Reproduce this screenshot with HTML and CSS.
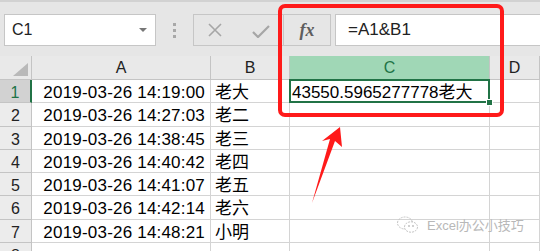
FILE: index.html
```html
<!DOCTYPE html>
<html>
<head>
  <meta charset="utf-8">
  <title>Excel</title>
  <link rel="stylesheet" href="styles.css">
</head>
<body>
  <div class="toolbar">
    <div class="namebox">C1<span class="caret"></span></div>
    <div class="grip"><i></i><i></i><i></i></div>
    <div class="btns">
      <svg class="cancel" width="16" height="14" viewBox="0 0 16 14"><path d="M2 1 L14 13 M14 1 L2 13" stroke="#a6a6a6" stroke-width="1.6" fill="none"/></svg>
      <svg class="enter" width="18" height="13" viewBox="0 0 18 13"><path d="M1 7 L6 12 L17 1" stroke="#a6a6a6" stroke-width="2.2" fill="none"/></svg>
    </div>
    <div class="fx">fx</div>
    <div class="formula">=A1&amp;B1</div>
  </div>

  <div class="sheet">
    <div class="hd corner"><span class="tri"></span></div>
    <div class="hd">A</div>
    <div class="hd">B</div>
    <div class="hd sel-col">C</div>
    <div class="hd">D</div>

    <div class="rh sel-row">1</div><div class="c date">2019-03-26 14:19:00</div><div class="c">老大</div><div class="c active">43550.5965277778老大</div><div class="c"></div>
    <div class="rh">2</div><div class="c date">2019-03-26 14:27:03</div><div class="c">老二</div><div class="c"></div><div class="c"></div>
    <div class="rh">3</div><div class="c date">2019-03-26 14:38:45</div><div class="c">老三</div><div class="c"></div><div class="c"></div>
    <div class="rh">4</div><div class="c date">2019-03-26 14:40:42</div><div class="c">老四</div><div class="c"></div><div class="c"></div>
    <div class="rh">5</div><div class="c date">2019-03-26 14:41:07</div><div class="c">老五</div><div class="c"></div><div class="c"></div>
    <div class="rh">6</div><div class="c date">2019-03-26 14:42:14</div><div class="c">老六</div><div class="c"></div><div class="c"></div>
    <div class="rh">7</div><div class="c date">2019-03-26 14:48:21</div><div class="c">小明</div><div class="c"></div><div class="c"></div>
    <div class="rh">8</div><div class="c date"></div><div class="c"></div><div class="c"></div><div class="c"></div>
  </div>

  <div class="mark-box"></div>
  <svg class="arrow" width="60" height="90" viewBox="300 120 60 90">
    <polygon points="340,127 342,147 335,141 312,203 330,139 322,141" fill="#ff1a1a"/>
  </svg>
  <div class="watermark">
    <svg width="24" height="18" viewBox="0 0 24 18"><ellipse cx="9" cy="7" rx="7.5" ry="6" fill="none" stroke="#c4c4c4" stroke-width="1" stroke-dasharray="2 1"/><ellipse cx="15" cy="11" rx="6.5" ry="5.2" fill="#fff" stroke="#c4c4c4" stroke-width="1" stroke-dasharray="2 1"/><circle cx="13" cy="10" r="0.9" fill="#bbb"/><circle cx="17" cy="10" r="0.9" fill="#bbb"/></svg>
    <span>Excel办公小技巧</span>
  </div>
</body>
</html>
```

FILE: styles.css
```css
html, body {
  margin: 0;
  padding: 0;
  background: #fff;
  overflow: hidden;
  font-family: "Liberation Sans", "Noto Sans CJK SC", sans-serif;
}
body {
  position: relative;
  width: 540px;
  height: 251px;
}
.toolbar {
  height: 56px;
  box-sizing: border-box;
  border-top: 2px solid #d2d2d2;
  background: #e6e6e6;
  display: flex;
  align-items: flex-start;
  padding: 12px 0 0 4px;
}
.namebox {
  width: 152px;
  height: 32px;
  box-sizing: border-box;
  background: #fff;
  border: 1px solid #c6c6c6;
  font-size: 16px;
  line-height: 30px;
  padding-left: 7px;
  color: #222;
  position: relative;
}
.caret {
  position: absolute;
  right: 8px;
  top: 13px;
  border-left: 4px solid transparent;
  border-right: 4px solid transparent;
  border-top: 4px solid #777;
}
.grip {
  width: 3px;
  margin: 9px 17px 0 17px;
  display: flex;
  flex-direction: column;
  gap: 3px;
}
.grip i {
  width: 3px;
  height: 3px;
  background: #a8a8a8;
}
.btns {
  width: 91px;
  height: 32px;
  box-sizing: border-box;
  background: #e6e6e6;
  border: 1px solid #c6c6c6;
  display: flex;
  align-items: center;
  padding-left: 13px;
}
.btns .enter {
  margin-left: 29px;
  margin-top: 2px;
}
.fx {
  width: 47px;
  height: 32px;
  box-sizing: border-box;
  border: 1px solid #c6c6c6;
  border-left: none;
  font-family: "Liberation Serif", serif;
  font-style: italic;
  font-weight: bold;
  font-size: 18px;
  color: #5e5e5e;
  text-align: center;
  line-height: 30px;
}
.formula {
  flex: 1;
  height: 32px;
  box-sizing: border-box;
  margin-left: 4px;
  background: #fff;
  border: 1px solid #c6c6c6;
  border-right: none;
  font-size: 17px;
  line-height: 30px;
  padding-left: 12px;
  color: #222;
}
.sheet {
  display: grid;
  grid-template-columns: 32px 179px 79px 200px 1fr;
  grid-template-rows: 24px;
  grid-auto-rows: 23.3px;
}
.hd, .rh, .c {
  box-sizing: border-box;
  border-right: 1px solid #d4d4d4;
  border-bottom: 1px solid #d4d4d4;
  white-space: nowrap;
  overflow: visible;
}
.hd {
  background: #e9e9e9;
  border-color: #c4c4c4;
  text-align: center;
  font-size: 16px;
  line-height: 24px;
  color: #222;
}
.corner {
  position: relative;
}
.tri {
  position: absolute;
  right: 3px;
  bottom: 3px;
  width: 0;
  height: 0;
  border-left: 15px solid transparent;
  border-bottom: 13px solid #b9b9b9;
}
.sel-col {
  background: #a0d7b6;
  color: #217346;
  border-bottom-color: #217346;
}
.rh {
  background: #ececec;
  border-color: #c4c4c4;
  text-align: center;
  font-size: 16px;
  line-height: 20px;
  padding-top: 3px;
  color: #222;
}
.sel-row {
  background: #d2d2d2;
  color: #217346;
  border-right: 2px solid #217346;
}
.c {
  font-size: 17px;
  line-height: 20px;
  padding: 3px 4px 0 4px;
  color: #000;
}
.date {
  text-align: right;
  padding-right: 5px;
  letter-spacing: 0.2px;
}
.active {
  position: relative;
  padding-left: 2px;
}
.active::after {
  content: "";
  position: absolute;
  left: -1px;
  top: -1px;
  right: -1px;
  bottom: -1px;
  border: 2px solid #217346;
}
.active::before {
  content: "";
  position: absolute;
  right: -4px;
  bottom: -4px;
  width: 5px;
  height: 5px;
  background: #217346;
  border: 1px solid #fff;
  z-index: 1;
}
.mark-box {
  position: absolute;
  left: 278px;
  top: 4px;
  width: 226px;
  height: 113px;
  box-sizing: border-box;
  border: 4px solid #ff1a1a;
  border-radius: 7px;
}
.arrow {
  position: absolute;
  left: 300px;
  top: 120px;
}
.watermark {
  position: absolute;
  left: 396px;
  top: 215px;
  display: flex;
  align-items: center;
  gap: 7px;
  font-size: 13px;
  color: #b8b8b8;
}
```
